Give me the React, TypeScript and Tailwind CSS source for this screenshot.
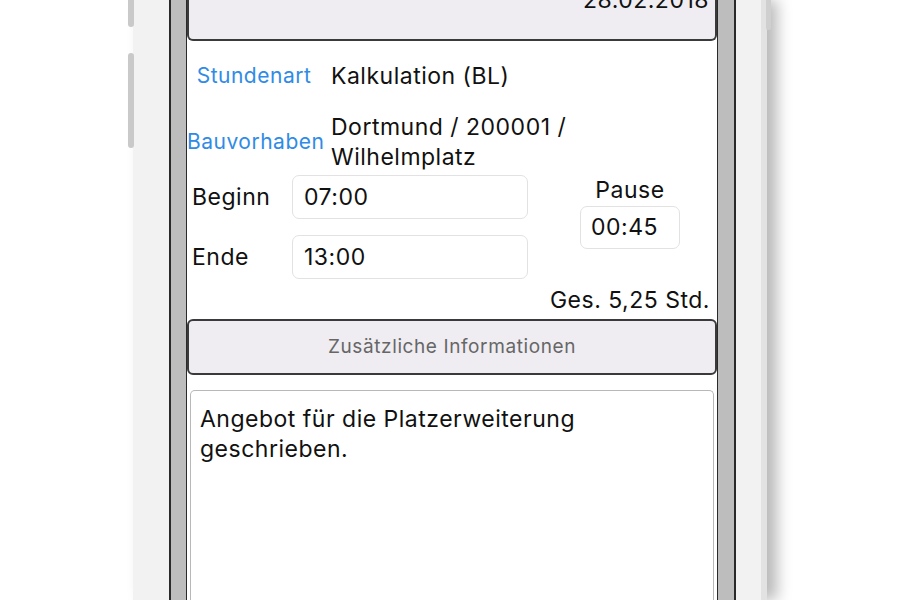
import React from "react";

const font = { fontFamily: "Inter, 'Liberation Sans', Arial, sans-serif" };

function TimeInput({ value, className }: { value: string; className: string }) {
  return (
    <div
      className={`flex items-center rounded-[7px] border border-[#e2e2e2] bg-white text-[23px] tracking-[0.5px] text-[#111] ${className}`}
    >
      {value}
    </div>
  );
}

export default function App() {
  return (
    <div className="relative h-[600px] w-[900px] overflow-hidden bg-white" style={font}>
      {/* side buttons of the phone */}
      <div className="absolute left-[128px] top-0 h-[27px] w-[6px] rounded-b-sm bg-[#c9c9c9]" />
      <div className="absolute left-[128px] top-[53px] h-[95px] w-[6px] rounded-sm bg-[#c9c9c9]" />
      <div className="absolute left-[766px] top-0 h-[30px] w-[5px] rounded-b-sm bg-[#cfcfcf]" />

      <div className="flex h-full">
        {/* phone body */}
        <div className="ml-[133px] flex h-full w-[634px] border-r-[6px] border-[#e2e2e2] bg-[#f2f2f2] pl-[36px] shadow-[10px_0_14px_rgba(0,0,0,0.28)]">
          {/* bezel */}
          <div className="flex h-full w-[567px] border-x-2 border-[#2a2a2a] bg-[#bdbdbd] pl-[15px] pr-[16px]">
            {/* screen */}
            <div className="flex h-full w-[532px] flex-col border-x border-[#2a2a2a] bg-white text-[23px] tracking-[0.5px] text-[#111]">
              {/* date header */}
              <div className="-mt-[20px] flex h-[61px] shrink-0 justify-end rounded-b-[6px] border-x-2 border-b-2 border-[#3a3a3a] bg-[#efedf2] pr-[6px] pt-[7px]">
                <span className="leading-[26px]">28.02.2018</span>
              </div>

              {/* Stundenart */}
              <div className="mt-[20px] flex h-[30px] items-center">
                <div className="w-[134px] text-center text-[21px] text-[#2f8be6]">Stundenart</div>
                <div className="ml-[10px]">Kalkulation (BL)</div>
              </div>

              {/* Bauvorhaben */}
              <div className="mt-[21px] flex items-center">
                <div className="w-[134px] whitespace-nowrap text-center text-[21px] text-[#2f8be6]">Bauvorhaben</div>
                <div className="ml-[10px] leading-[30px]">
                  Dortmund / 200001 /
                  <br />
                  Wilhelmplatz
                </div>
              </div>

              {/* times */}
              <div className="mt-[3px] flex">
                <div className="flex flex-col gap-[16px]">
                  <div className="flex items-center">
                    <div className="w-[105px] pl-[5px]">Beginn</div>
                    <TimeInput value="07:00" className="h-[44px] w-[236px] pl-[11px]" />
                  </div>
                  <div className="flex items-center">
                    <div className="w-[105px] pl-[5px]">Ende</div>
                    <TimeInput value="13:00" className="h-[44px] w-[236px] pl-[11px]" />
                  </div>
                </div>
                <div className="ml-[52px] flex w-[100px] flex-col items-center">
                  <div className="mt-[2px] leading-[26px]">Pause</div>
                  <TimeInput value="00:45" className="mt-[3px] h-[43px] w-[100px] pl-[10px]" />
                </div>
              </div>

              {/* total */}
              <div className="mt-[8px] pr-[7px] text-right leading-[26px]">Ges. 5,25 Std.</div>

              {/* extra info button */}
              <div className="mt-[6px] flex h-[56px] shrink-0 items-center justify-center rounded-[6px] border-2 border-[#3a3a3a] bg-[#efedf2] text-[19px] tracking-[0.6px] text-[#666]">
                Zusätzliche Informationen
              </div>

              {/* notes */}
              <div className="mx-[3px] mt-[15px] flex-1 rounded-t-[5px] border border-b-0 border-[#b8b8b8] px-[9px] pt-[13px] leading-[30px]">
                Angebot für die Platzerweiterung
                <br />
                geschrieben.
              </div>
            </div>
          </div>
        </div>
      </div>
    </div>
  );
}
